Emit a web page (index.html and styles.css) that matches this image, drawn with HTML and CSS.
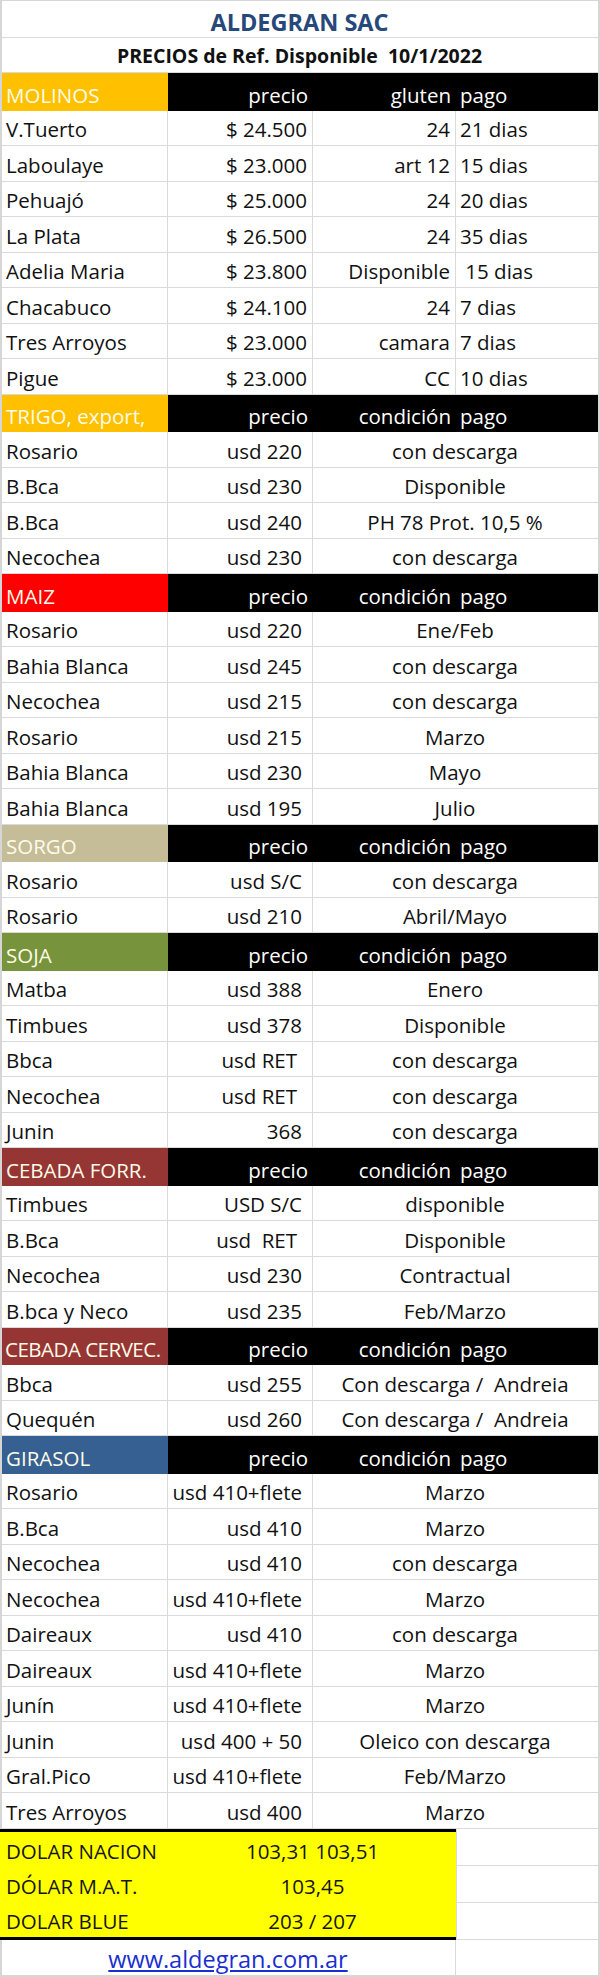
FILE: index.html
```html
<!DOCTYPE html>
<html lang="es">
<head>
<meta charset="utf-8">
<title>ALDEGRAN SAC</title>
<link rel="stylesheet" href="styles.css">
</head>
<body>
<div class="sheet">
  <div class="row title"><div class="c">ALDEGRAN SAC</div></div>
  <div class="row subtitle"><div class="c">PRECIOS de Ref. Disponible&nbsp; 10/1/2022</div></div>

  <div class="row head"><div class="c lbl gold">MOLINOS</div><div class="c r">precio</div><div class="c r">gluten</div><div class="c">pago</div></div>
  <div class="row d4"><div class="c">V.Tuerto</div><div class="c r">$ 24.500</div><div class="c r">24</div><div class="c">21 dias</div></div>
  <div class="row d4"><div class="c">Laboulaye</div><div class="c r">$ 23.000</div><div class="c r">art 12</div><div class="c">15 dias</div></div>
  <div class="row d4"><div class="c">Pehuajó</div><div class="c r">$ 25.000</div><div class="c r">24</div><div class="c">20 dias</div></div>
  <div class="row d4"><div class="c">La Plata</div><div class="c r">$ 26.500</div><div class="c r">24</div><div class="c">35 dias</div></div>
  <div class="row d4"><div class="c">Adelia Maria</div><div class="c r">$ 23.800</div><div class="c r">Disponible</div><div class="c">&nbsp;15 dias</div></div>
  <div class="row d4"><div class="c">Chacabuco</div><div class="c r">$ 24.100</div><div class="c r">24</div><div class="c">7 dias</div></div>
  <div class="row d4"><div class="c">Tres Arroyos</div><div class="c r">$ 23.000</div><div class="c r">camara</div><div class="c">7 dias</div></div>
  <div class="row d4"><div class="c">Pigue</div><div class="c r">$ 23.000</div><div class="c r">CC</div><div class="c">10 dias</div></div>

  <div class="row head"><div class="c lbl gold">TRIGO, export,</div><div class="c r">precio</div><div class="c r">condición</div><div class="c">pago</div></div>
  <div class="row d3"><div class="c">Rosario</div><div class="c r u">usd 220</div><div class="c m">con descarga</div></div>
  <div class="row d3"><div class="c">B.Bca</div><div class="c r u">usd 230</div><div class="c m">Disponible</div></div>
  <div class="row d3"><div class="c">B.Bca</div><div class="c r u">usd 240</div><div class="c m">PH 78 Prot. 10,5 %</div></div>
  <div class="row d3"><div class="c">Necochea</div><div class="c r u">usd 230</div><div class="c m">con descarga</div></div>

  <div class="row head"><div class="c lbl red">MAIZ</div><div class="c r">precio</div><div class="c r">condición</div><div class="c">pago</div></div>
  <div class="row d3"><div class="c">Rosario</div><div class="c r u">usd 220</div><div class="c m">Ene/Feb</div></div>
  <div class="row d3"><div class="c">Bahia Blanca</div><div class="c r u">usd 245</div><div class="c m">con descarga</div></div>
  <div class="row d3"><div class="c">Necochea</div><div class="c r u">usd 215</div><div class="c m">con descarga</div></div>
  <div class="row d3"><div class="c">Rosario</div><div class="c r u">usd 215</div><div class="c m">Marzo</div></div>
  <div class="row d3"><div class="c">Bahia Blanca</div><div class="c r u">usd 230</div><div class="c m">Mayo</div></div>
  <div class="row d3"><div class="c">Bahia Blanca</div><div class="c r u">usd 195</div><div class="c m">Julio</div></div>

  <div class="row head"><div class="c lbl tan">SORGO</div><div class="c r">precio</div><div class="c r">condición</div><div class="c">pago</div></div>
  <div class="row d3"><div class="c">Rosario</div><div class="c r u">usd S/C</div><div class="c m">con descarga</div></div>
  <div class="row d3"><div class="c">Rosario</div><div class="c r u">usd 210</div><div class="c m">Abril/Mayo</div></div>

  <div class="row head"><div class="c lbl green">SOJA</div><div class="c r">precio</div><div class="c r">condición</div><div class="c">pago</div></div>
  <div class="row d3"><div class="c">Matba</div><div class="c r u">usd 388</div><div class="c m">Enero</div></div>
  <div class="row d3"><div class="c">Timbues</div><div class="c r u">usd 378</div><div class="c m">Disponible</div></div>
  <div class="row d3"><div class="c">Bbca</div><div class="c r u uu">usd RET</div><div class="c m">con descarga</div></div>
  <div class="row d3"><div class="c">Necochea</div><div class="c r u uu">usd RET</div><div class="c m">con descarga</div></div>
  <div class="row d3"><div class="c">Junin</div><div class="c r u">368</div><div class="c m">con descarga</div></div>

  <div class="row head"><div class="c lbl brown">CEBADA FORR.</div><div class="c r">precio</div><div class="c r">condición</div><div class="c">pago</div></div>
  <div class="row d3"><div class="c">Timbues</div><div class="c r u">USD S/C</div><div class="c m">disponible</div></div>
  <div class="row d3"><div class="c">B.Bca</div><div class="c r u uu">usd&nbsp; RET</div><div class="c m">Disponible</div></div>
  <div class="row d3"><div class="c">Necochea</div><div class="c r u">usd 230</div><div class="c m">Contractual</div></div>
  <div class="row d3"><div class="c">B.bca y Neco</div><div class="c r u">usd 235</div><div class="c m">Feb/Marzo</div></div>

  <div class="row head"><div class="c lbl brown tight">CEBADA CERVEC.</div><div class="c r">precio</div><div class="c r">condición</div><div class="c">pago</div></div>
  <div class="row d3"><div class="c">Bbca</div><div class="c r u">usd 255</div><div class="c m">Con descarga /&nbsp; Andreia</div></div>
  <div class="row d3"><div class="c">Quequén</div><div class="c r u">usd 260</div><div class="c m">Con descarga /&nbsp; Andreia</div></div>

  <div class="row head"><div class="c lbl blue">GIRASOL</div><div class="c r">precio</div><div class="c r">condición</div><div class="c">pago</div></div>
  <div class="row d3"><div class="c">Rosario</div><div class="c r u">usd 410+flete</div><div class="c m">Marzo</div></div>
  <div class="row d3"><div class="c">B.Bca</div><div class="c r u">usd 410</div><div class="c m">Marzo</div></div>
  <div class="row d3"><div class="c">Necochea</div><div class="c r u">usd 410</div><div class="c m">con descarga</div></div>
  <div class="row d3"><div class="c">Necochea</div><div class="c r u">usd 410+flete</div><div class="c m">Marzo</div></div>
  <div class="row d3"><div class="c">Daireaux</div><div class="c r u">usd 410</div><div class="c m">con descarga</div></div>
  <div class="row d3"><div class="c">Daireaux</div><div class="c r u">usd 410+flete</div><div class="c m">Marzo</div></div>
  <div class="row d3"><div class="c">Junín</div><div class="c r u">usd 410+flete</div><div class="c m">Marzo</div></div>
  <div class="row d3"><div class="c">Junin</div><div class="c r u">usd 400 + 50</div><div class="c m">Oleico con descarga</div></div>
  <div class="row d3"><div class="c">Gral.Pico</div><div class="c r u">usd 410+flete</div><div class="c m">Feb/Marzo</div></div>
  <div class="row d3"><div class="c">Tres Arroyos</div><div class="c r u">usd 400</div><div class="c m">Marzo</div></div>

  <div class="fx">
    <div class="fx-box">
      <div class="fx-row"><div class="c">DOLAR NACION</div><div class="c m">103,31 103,51</div></div>
      <div class="fx-row"><div class="c">DÓLAR M.A.T.</div><div class="c m">103,45</div></div>
      <div class="fx-row"><div class="c">DOLAR BLUE</div><div class="c m">203 / 207</div></div>
    </div>
    <div class="fx-side">
      <div class="side-cell"></div>
      <div class="side-cell"></div>
      <div class="side-cell"></div>
    </div>
  </div>

  <div class="row web"><div class="c m"><a href="#" class="link">www.aldegran.com.ar</a></div><div class="c"></div></div>
</div>
</body>
</html>
```

FILE: styles.css
```css
* { box-sizing: border-box; }

html, body {
  margin: 0;
  padding: 0;
  background: #ffffff;
}

body {
  width: 600px;
  font-family: "Open Sans", "Liberation Sans", sans-serif;
  font-size: 20.5px;
  color: #111111;
}

.sheet {
  width: 600px;
  border-top: 1px solid #d6d6d6;
  border-left: 2px solid #d6d6d6;
  border-right: 2px solid #d6d6d6;
  border-bottom: 2px solid #d6d6d6;
}

.row {
  display: grid;
  grid-template-columns: 166px 145px 143px 142px;
  border-bottom: 1px solid #dadada;
}

.c {
  display: flex;
  align-items: flex-end;
  padding: 0 5px 4px 4px;
  line-height: 24px;
  white-space: nowrap;
  min-width: 0;
}

.r { justify-content: flex-end; }
.m { justify-content: center; }

/* title rows */
.title, .subtitle {
  grid-template-columns: 1fr;
}
.title { height: 37px; }
.subtitle { height: 35px; }

.title .c {
  justify-content: center;
  font-weight: 700;
  font-size: 23.5px;
  color: #27487a;
  padding-bottom: 3px;
}

.subtitle .c {
  justify-content: center;
  font-weight: 700;
  font-size: 19.5px;
  color: #111;
  padding-bottom: 4px;
}

/* header rows */
.head {
  height: 37.5px;
  background: #000;
  color: #fff;
  border-bottom: none;
}
.head .c { padding-bottom: 4px; }
.head .lbl { color: #fffbe8; }
.head .tight { letter-spacing: -0.5px; padding-left: 3px; }

.gold { background: #ffc000; }
.red { background: #ff0000; }
.tan { background: #c4bd97; }
.green { background: #77933c; }
.brown { background: #963634; }
.blue { background: #376092; }

/* data rows */
.d4, .d3 { height: 35.5px; }

.d4 .c, .d3 .c { border-right: 1px solid #dadada; }
.d4 .c:last-child, .d3 .c:last-child { border-right: none; }

.d3 .m { grid-column: span 2; }

.u { padding-right: 10px; }
.uu { padding-right: 15px; }

/* dollar block */
.fx {
  display: grid;
  grid-template-columns: 454px 142px;
}

.fx-box {
  background: #ffff00;
  border-top: 3px solid #000;
  border-bottom: 3px solid #000;
  margin-left: -2px;
  color: #151515;
}

.fx-row {
  display: grid;
  grid-template-columns: 168px 1fr;
  height: 35px;
}

.fx-row .c { padding-left: 6px; }

.fx-side {
  display: flex;
  flex-direction: column;
}

.side-cell {
  height: 37px;
  border-bottom: 1px solid #dadada;
  border-left: 1px solid #dadada;
}

.web {
  grid-template-columns: 454px 142px;
  height: 35.5px;
  border-bottom: none;
}
.web .c:first-child { border-right: 1px solid #dadada; }

.link {
  font-size: 23.5px;
  color: #1a2fd1;
  text-decoration: underline;
  text-underline-offset: 2px;
}
```
